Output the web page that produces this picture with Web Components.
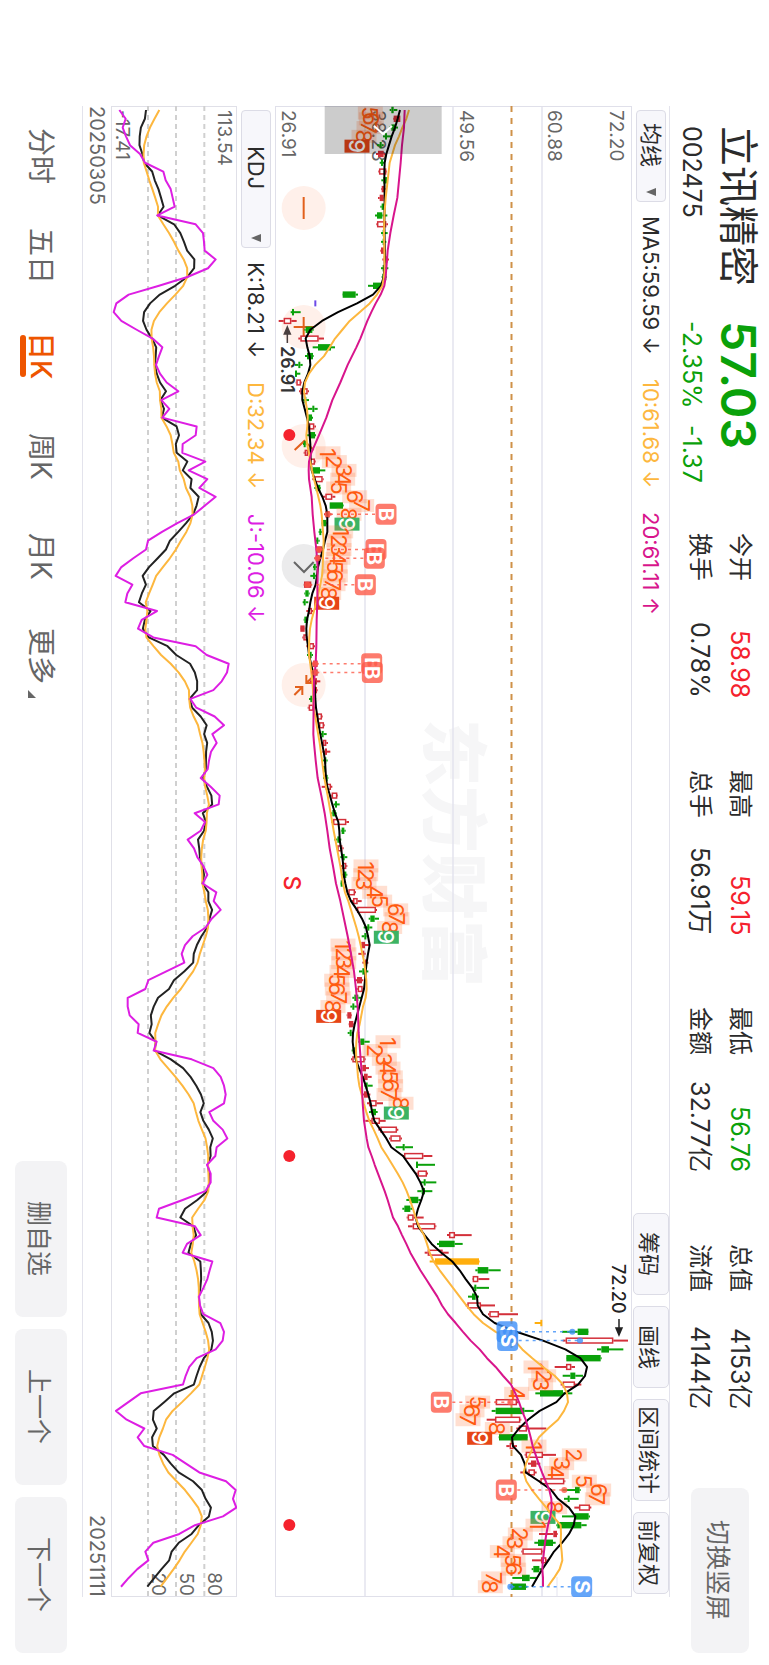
<!DOCTYPE html>
<html lang="zh-CN">
<head>
<meta charset="utf-8">
<meta name="viewport" content="width=device-width, initial-scale=1">
<title>立讯精密 002475 日K</title>
<style>
  html, body { margin: 0; height: 100%; background: #fff; }
  body { font-family: "Inter", "Noto Sans CJK SC", sans-serif; color: #2b2b2b; }
</style>
</head>
<body>
<stock-screen></stock-screen>

<script>
const define = (name, html, setup) => {
  const template = document.createElement('template');
  template.innerHTML = '<style>*{box-sizing:border-box}</style>' + html;
  customElements.define(name, class extends HTMLElement {
    constructor() {
      super();
      this.attachShadow({ mode: 'open' }).append(template.content.cloneNode(true));
    }
    connectedCallback() { if (setup) setup(this, this.shadowRoot); }
  });
};

/* ---------- small parts ---------- */

define('quote-stat', `
<style>
  :host { display: flex; justify-content: space-between; align-items: center; font-size: 24px; line-height: 40px; white-space: nowrap; }
  .value { color: var(--tone, #2b2b2b); font-size: 25px; }
</style>
<span><slot name="label"></slot></span><span class="value"><slot></slot></span>`);

define('soft-button', `
<style>
  :host { display: block; inline-size: 156px; block-size: 52px; }
  button { writing-mode: vertical-rl; text-orientation: sideways; inline-size: 100%; block-size: 100%;
    border: 0; border-radius: 8px; background: #f3f3f5; color: #666; font: inherit; font-size: 25px; padding: 0; text-align: center; }
</style>
<button type="button"><slot></slot></button>`);

define('tool-button', `
<style>
  :host { display: block; block-size: 36px; }
  button { writing-mode: vertical-rl; text-orientation: sideways; block-size: 100%; min-inline-size: 82px; padding: 0; padding-inline: 6px;
    border: 1px solid #dcdce6; border-radius: 5px; background: #f7f7fb; color: #2b2b2b; font: inherit; font-size: 22px; text-align: center; white-space: nowrap; }
</style>
<button type="button"><slot></slot></button>`);

define('indicator-select', `
<style>
  :host { display: block; position: relative; inline-size: var(--w, 92px); block-size: 30px; }
  select { appearance: none; writing-mode: vertical-rl; text-orientation: sideways; inline-size: 100%; block-size: 100%; margin: 0;
    padding: 0; padding-inline-start: var(--pad, 12px); border: 1px solid #dcdce6; border-radius: 4px; background: #f7f7fb;
    color: #2b2b2b; font: inherit; font-size: 22px; line-height: 28px; }
  svg { position: absolute; inset-inline-end: 6px; inset-block-start: 10px; width: 10px; height: 8px; pointer-events: none; }
</style>
<select></select><svg viewBox="0 0 10 8"><path d="M0 4L10 0V8Z" fill="#666"/></svg>`,
(host, root) => {
  const select = root.querySelector('select');
  select.setAttribute('aria-label', host.getAttribute('label'));
  for (const name of host.getAttribute('options').split(',')) select.add(new Option(name));
});

define('period-tab', `
<style>
  :host { display: flex; justify-content: center; }
  button { position: relative; writing-mode: vertical-rl; text-orientation: sideways; border: 0; background: none; padding: 0;
    font: inherit; font-size: 28px; line-height: 42px; color: #666; white-space: nowrap; }
  :host([active]) button { color: #ee5500; font-weight: 500; }
  :host([active]) button::after { content: ""; position: absolute; inset-inline: 3px; inset-block-end: 0; block-size: 6px; border-radius: 3px; background: #ee5500; }
  :host([more]) button::after { content: ""; position: absolute; inset-inline-end: -14px; inset-block-end: 8px; width: 8px; height: 8px;
    background: #666; clip-path: polygon(0 0, 0 100%, 100% 100%); }
</style>
<button type="button"><slot></slot></button>`);

/* ---------- header ---------- */

define('quote-header', `
<style>
  :host { display: flex; align-items: center; block-size: 99px; padding-inline: 126px 12px; }
  .title { display: grid; grid-template-columns: 195px 212px; grid-template-rows: 50px 43px; align-items: center; white-space: nowrap; padding-block-start: 6px; }
  h1 { margin: 0; font-size: 40px; font-weight: 400; line-height: 50px; }
  .price { font-size: 48px; font-weight: 600; line-height: 50px; color: #0aa10a; }
  .code { font-size: 25px; line-height: 36px; }
  .change { display: flex; gap: 16px; font-size: 25px; line-height: 36px; color: #0aa10a; }
  .stats { display: grid; grid-template-columns: repeat(4, 165px); grid-template-rows: 40px 40px; grid-auto-flow: column; column-gap: 72px; }
  .up { --tone: #f5222d; }
  .down { --tone: #0aa10a; }
  soft-button { margin-inline-start: auto; inline-size: 165px; block-size: 58px; }
</style>
<div class="title">
  <h1>立讯精密</h1><span class="price">57.03</span>
  <span class="code">002475</span><span class="change"><span>-2.35%</span><span>-1.37</span></span>
</div>
<div class="stats">
  <quote-stat class="up"><span slot="label">今开</span>58.98</quote-stat>
  <quote-stat><span slot="label">换手</span>0.78%</quote-stat>
  <quote-stat class="up"><span slot="label">最高</span>59.15</quote-stat>
  <quote-stat><span slot="label">总手</span>56.91万</quote-stat>
  <quote-stat class="down"><span slot="label">最低</span>56.76</quote-stat>
  <quote-stat><span slot="label">金额</span>32.77亿</quote-stat>
  <quote-stat><span slot="label">总值</span>4153亿</quote-stat>
  <quote-stat><span slot="label">流值</span>4144亿</quote-stat>
</div>
<soft-button>切换竖屏</soft-button>`);

define('indicator-bar', `
<style>
  :host { display: flex; align-items: center; block-size: 38px; padding-inline-start: 4px; font-size: 22px; white-space: nowrap; }
  :host([compact]) { block-size: 37px; }
  .values { display: flex; gap: 24px; margin-inline-start: 14px; }
  .tools { display: flex; gap: 11px; margin-inline: auto 3px; }
</style>
<slot name="select"></slot>
<div class="values"><slot></slot></div>
<div class="tools"><slot name="tools"></slot></div>`);

/* ---------- charts: drawn in landscape space, turned a quarter to the right ---------- */

const STEP = 8.79, FIRST = 4;          // bar pitch and position of the first bar
const at = i => FIRST + i * STEP;
const unit = n => (n - 16) / 3;        // data is kept in thirds, offset from the axis
const num = n => +n.toFixed(2);

const GREEN = '#0aa10a', RED = '#d3303a';

/* low, body low, body high, high, kind */
const CANDLES = `360,365,372,383g 370,372,392,392R 358,365,378,385g 340,350,352,364g 322,330,336,342g 319,325,342,347R 330,334,340,344g 326,328,350,352r 335,341,352,354g 334,336,346,348R
325,330,342,346R 332,336,344,346g 316,322,338,353g 320,322,350,355r 334,343,345,354g 334,343,345,350g 332,334,346,348R 338,342,354,358R 334,343,345,356g 336,338,350,352g
295,310,334,336g 218,219,258,265g 137,137,137,137p 63,70,73,93g 27,42,65,81r 104,108,128,132g 86,92,147,163r 129,145,184,196g 106,112,130,132g 76,86,92,99g
76,80,82,92g 78,80,94,96r 88,92,114,118r 97,106,110,118g 115,128,134,144g 112,116,127,130g 113,118,134,139r 112,120,136,139g 100,106,108,114g 102,105,115,118r
118,121,136,138r 124,130,151,167g 128,134,159,162r 134,138,152,154g 160,167,188,197r 180,180,220,222g 163,167,180,186R 155,156,170,172g 147,150,155,158g 136,143,146,150g
138,140,157,159R 134,138,150,152R 130,134,138,142g 122,130,136,142g 102,103,125,127R 104,107,117,120g 99,104,108,116g 110,115,127,130r 102,104,114,116g 91,92,105,106R
98,101,112,115r 110,118,133,136r 112,120,126,130g 128,130,144,146R 130,134,144,146R 120,134,142,152R 130,134,142,144R 118,124,128,132g 114,117,132,137r 136,142,157,159r
146,148,163,165r 152,158,162,171g 156,160,170,175r 158,166,172,182R 160,168,170,174g 160,162,166,168g 160,164,174,176g 156,168,184,188r 180,186,203,205r 192,199,202,210g
184,188,198,201g 185,190,230,238r 214,216,224,228g 194,203,210,215g 200,203,218,222r 212,222,225,233g 214,217,230,233r 216,220,230,233g 213,216,219,221g 232,236,256,259r
246,250,264,276r 258,262,319,322r 297,302,315,328g 282,295,299,308g 276,284,290,298g 272,275,286,300R 266,280,284,288R 278,286,292,296R 268,278,286,296g 255,262,277,281R
260,264,279,284r 248,254,266,274g 242,248,254,262g 231,233,245,247R 237,238,251,253R 234,240,246,252g 266,272,284,300g 246,249,258,260g 244,248,285,288r 274,278,289,298R
276,283,294,306R 284,290,294,309g 280,283,297,302R 292,298,321,340r 298,306,319,324g 287,305,331,348r 326,332,382,386r 358,362,393,397r 378,400,405,430g 398,403,461,488r
440,441,445,496g 440,444,472,475r 453,464,468,500g 443,456,466,488g 410,420,446,453g 398,404,422,429g 411,414,432,462r 415,429,497,500r 532,538,556,606r 502,508,555,579g
465,474,519,537r 480,496,628,630o 617,624,656,693g 608,609,626,659r 611,616,620,658g 595,607,618,628g 588,593,634,676r 655,659,688,745r 795,815,818,818o 877,924,956,957g
879,888,1031,1075r 982,995,1018,1061g 889,890,993,996g 855,889,905,916r 879,902,917,940g 873,879,916,935r 797,811,880,908g 675,678,742,745r 666,678,764,792g 651,676,752,755r
740,747,772,830r 687,688,774,775g 710,720,732,742r 765,768,820,859r 775,784,800,812R 752,776,796,801r 808,812,884,887r 878,916,930,933g 883,896,900,927g 914,928,961,965r
877,915,957,961g 860,863,935,951g 808,851,862,864R 794,805,850,858g 755,758,818,821r 787,814,830,836r 786,791,809,816g 728,757,780,803g 720,724,769,773g`.split(/\s+/);

/* moving averages: index:value */
const MA5 = '0:391 1:384 2:376 3:366 4:358 5:350 6:345 7:344 10:345 13:344 17:346 19:342 20:334 21:310 22:262 23:205 24:157 25:122 26:108 27:113 28:120 29:122 30:115 31:104 32:98 33:98 34:105 35:112 36:118 37:120 38:122 40:123 41:126 42:135 43:145 44:158 45:168 46:173 48:173 49:166 50:160 51:152 52:145 53:142 54:138 55:128 56:122 57:118 58:112 59:110 60:111 61:115 62:118 63:124 64:130 65:134 66:136 67:137 68:139 69:143 70:147 71:152 72:157 73:162 74:166 76:169 77:173 78:181 79:188 80:196 81:206 82:209 83:210 84:214 85:218 86:221 87:222 88:227 89:233 90:244 91:262 92:277 93:289 94:295 95:300 96:295 97:291 98:288 99:286 100:283 101:276 102:269 103:262 104:255 105:250 106:249 107:252 108:258 109:268 110:279 111:288 112:296 113:303 114:307 115:314 116:332 117:350 118:365 119:400 120:419 121:438 122:452 123:463 124:455 125:445 126:438 127:445 128:465 129:486 130:515 131:548 132:570 133:588 134:608 135:622 136:624 137:640 138:675 139:740 140:820 141:887 142:932 143:952 144:946 145:925 146:885 147:860 148:810 149:775 150:748 151:727 152:730 153:754 154:765 155:768 156:808 157:845 158:865 159:898 160:917 161:912 162:898 163:877 164:853 165:836 166:818 167:802 168:787';
const MA10 = '0:418 1:410 2:398 3:388 4:376 5:368 6:360 8:354 10:348 12:344 14:343 16:344 18:345 19:343 20:338 21:322 22:300 23:270 24:240 25:218 26:196 27:180 28:163 29:137 30:118 31:106 32:103 33:107 34:112 35:114 36:113 37:110 38:112 39:118 40:122 41:127 42:133 43:140 44:146 45:152 46:156 47:158 48:160 49:162 50:161 51:160 52:159 53:157 54:152 55:146 56:140 57:133 58:126 59:121 60:119 61:118 62:118 63:122 64:125 65:128 66:130 67:131 68:132 69:137 70:141 72:150 74:157 76:164 78:174 80:183 82:192 84:202 86:212 88:220 89:226 90:236 91:244 92:252 93:260 94:267 95:273 96:278 97:284 98:287 99:290 100:291 101:288 102:280 103:275 104:270 105:263 106:260 107:259 108:260 109:263 110:265 111:269 112:276 113:282 114:290 115:299 116:312 117:324 118:335 119:352 120:368 121:384 122:399 123:411 124:421 125:430 126:438 127:448 128:463 129:472 130:480 131:492 132:510 133:530 134:550 135:570 136:590 137:612 138:640 139:678 140:735 141:758 142:788 143:820 144:855 145:880 146:892 147:895 148:883 149:865 150:835 151:808 152:792 153:780 154:769 155:762 156:770 157:787 158:808 159:830 160:850 161:873 162:874 163:873 164:876 165:878 166:870 167:853 168:834';
const MA20 = '0:405 2:403 4:397 6:393 8:388 10:383 12:372 14:362 16:354 18:350 19:348 20:344 21:333 22:318 23:305 24:293 26:272 27:260 29:234 31:212 33:188 35:170 37:148 39:125 40:118 41:117 42:118 43:122 44:126 46:129 48:134 50:140 52:144 56:143 58:141 61:140 63:138 65:133 67:132 71:131 72:133 74:138 76:144 78:155 80:165 82:173 84:180 86:190 88:199 90:212 92:223 94:234 96:244 98:253 100:259 102:264 105:267 107:271 109:275 113:279 115:283 117:291 118:296 119:306 120:315 121:325 122:335 123:345 124:354 125:362 126:370 127:385 128:397 129:410 130:422 131:437 132:452 133:469 134:486 135:503 136:517 137:535 138:558 139:580 140:603 141:630 142:652 143:678 144:700 145:724 146:737 147:748 148:757 149:768 150:776 151:783 152:789 153:798 154:807 155:817 156:828 157:839 158:845 159:846 160:842 161:835 162:830 163:826 164:823 165:820 166:818 167:820 168:820';

/* sequential count marks: first bar, first number, centre of each mark, colour of the ninth */
const COUNTS = [
  [0, 5, [302, 305, 298, 283, 262], 'r'],
  [39, 1, [175, 194, 223, 219, 207, 255, 276, 238, 232], 'g'],
  [48, 1, [213, 208, 208, 205, 196, 197, 190, 177, 171], 'r'],
  [86, 1, [289, 288, 283, 315, 330, 378, 382, 360, 350], 'g'],
  [95, 1, [220, 223, 222, 217, 201, 203, 207, 190, 177], 'r'],
  [106, 1, [355, 316, 344, 355, 362, 363, 358, 394, 380], 'g'],
  [143, 1, [799, 822, 813, 741, 624, 607, 595, 683, 630], 'r'],
  [152, 1, [793, 914, 876, 860, 944, 987, 983, 855, 820], 'g'],
  [161, 1, [805, 752, 736, 698, 730, 732, 672, 662], 'r'],
];

/* trades: bar, badge centre, letter, price point */
const TRADES = [
  [46, 349, 'B', 174], [50, 319, 'B', 148], [51, 314, 'B', 144], [54, 287, 'B', 113],
  [63, 306, 'B', 136], [64, 308, 'B', 134], [147, 515, 'B', 722], [157, 710, 'B', 884],
  [139, 712, 'S', 908], [140, 714, 'S', 931], [168, 936, 'S', 722],
];

define('price-chart', `
<style>
  :host { display: block; }
  svg { display: block; writing-mode: horizontal-tb; height: 100%; width: auto; font-family: "Inter", "Noto Sans CJK SC", sans-serif; }
</style>
<svg viewBox="0 0 357 1491" role="img" aria-label="日K线图"><g transform="translate(357 0) rotate(90)"></g></svg>`,
(host, root) => {
  const H = 357, L = 1491;
  const y = n => num(H - unit(n));
  const out = [];
  const line = (x1, y1, x2, y2, extra) => out.push(`<path d="M${num(x1)} ${num(y1)}L${num(x2)} ${num(y2)}" fill="none" ${extra}/>`);
  const text = (x, base, size, fill, str, extra = '') => out.push(`<text x="${num(x)}" y="${num(base)}" font-size="${size}" fill="${fill}" ${extra}>${str}</text>`);

  text(747, 203, 67, '#f6f6f7', '东方财富', 'font-weight="900" text-anchor="middle"');
  for (const v of [90, 178, 267]) line(0, H - v, L, H - v, 'stroke="#e3e3ee" stroke-width="1.5"');
  line(L - 20, H - 282, L, H - 282, 'stroke="#e3e3ee"');
  out.push(`<path d="M.5 0V${H}M${L - .5} 0V${H}M0 .5H${L}M0 ${H - .5}H${L}" fill="none" stroke="#e0e0ea"/>`);
  line(0, H - 236.5, L, H - 236.5, 'stroke="#cf9148" stroke-width="2" stroke-dasharray="6 6"');

  [['26.91', 7], ['38.23', 97], ['49.56', 185], ['60.88', 273], ['72.20', 335]].forEach(([s, v]) => text(4, H - v, 19, '#666', s));

  /* event icons */
  const disc = (cx, c, fill) => out.push(`<circle cx="${cx}" cy="${y(c)}" r="22" fill="${fill}"/>`);
  const rose = '#fff0ea', ink = 'stroke="#e2601c" stroke-width="2"';
  disc(102, 102, rose); line(91, y(102), 113, y(102), ink);
  disc(221, 102, rose); line(211, y(102), 232, y(102), ink); line(221, y(72), 221, y(133), ink);
  disc(340, 102, rose); out.push(`<path d="M344 ${y(75)}L335 ${y(104)}L344 ${y(132)}" fill="none" ${ink}/>`);
  disc(460, 102, '#ebebec'); out.push(`<path d="M456 ${y(73)}L466 ${y(103)}L456 ${y(132)}" fill="none" stroke="#666" stroke-width="2"/>`);
  disc(579, 102, rose);
  out.push(`<path d="M569 ${y(135)}L577 ${y(110)}M569 ${y(110)}H577V${y(132)}M589 ${y(74)}L581 ${y(98)}M589 ${y(98)}H581V${y(76)}" fill="none" ${ink}/>`);
  for (const x of [329, 1050, 1419]) out.push(`<circle cx="${x}" cy="${y(59)}" r="6" fill="#f5222d"/>`);
  text(777, y(42), 23, '#f5222d', 'S', 'text-anchor="middle" font-weight="500"');

  /* candles */
  CANDLES.forEach((row, i) => {
    const kind = row.slice(-1), [lo, b0, b1, hi] = row.slice(0, -1).split(',').map(Number);
    const x = at(i), color = { g: GREEN, r: RED, R: RED, o: '#ffae0d', p: '#6d4ae8' }[kind];
    if (kind === 'p') return line(x - 3, y(lo), x + 3, y(lo), `stroke="${color}" stroke-width="2"`);
    line(x, y(lo), x, y(b0), `stroke="${color}" stroke-width="2"`);
    line(x, y(b1), x, y(hi), `stroke="${color}" stroke-width="2"`);
    const h = Math.max((b1 - b0) / 3, 2);
    out.push(kind === 'r'
      ? `<rect x="${num(x - 2.4)}" y="${num(y(b1) + .7)}" width="4.8" height="${num(Math.max(h - 1.4, 1))}" fill="#fff" stroke="${color}" stroke-width="1.5"/>`
      : `<rect x="${num(x - 3.2)}" y="${y(b1)}" width="6.4" height="${num(h)}" fill="${color}"/>`);
  });

  /* count marks */
  for (const [start, from, marks, last] of COUNTS) marks.forEach((c, k) => {
    const n = from + k, x = Math.max(at(start + k) + (n === 9 ? 1 : 0), 7);
    const nine = n === 9;
    out.push(`<rect x="${num(x - 6.5)}" y="${num(y(c) - 12.5)}" width="13" height="25" fill="${nine ? (last === 'g' ? '#3cb364' : '#e64517') : '#ff7a3d'}" ${nine ? '' : 'fill-opacity=".24"'}/>`);
    text(x, y(c) + 8, 22, nine ? '#fff' : '#ff5a0f', n, `text-anchor="middle"${nine ? ' font-weight="500"' : ''}`);
  });

  /* averages */
  const poly = (src, color, w) => out.push(`<polyline points="${src.split(' ').map(p => { const [i, v] = p.split(':'); return num(at(+i)) + ',' + y(+v); }).join(' ')}" fill="none" stroke="${color}" stroke-width="${w}" stroke-linejoin="round"/>`);
  poly(MA5, '#000', 2);
  poly(MA10, '#fdb73e', 2);
  poly(MA20, '#d8158c', 2);

  /* trades */
  for (const [i, c, letter, p] of TRADES) {
    const x = at(i), color = letter === 'B' ? '#fd5a48' : '#3d8ef7';
    line(x, y(c) + (p > c ? -11 : 11), x, y(p), `stroke="${color}" stroke-width="1.5" stroke-dasharray="3 4" opacity=".8"`);
    out.push(`<circle cx="${num(x)}" cy="${y(p)}" r="3" fill="${color}" opacity=".8"/>
      <rect x="${num(x - 10.5)}" y="${num(y(c) - 10.5)}" width="21" height="21" rx="4" fill="${color}" fill-opacity=".8"/>`);
    text(x, y(c) + 7, 20, '#fff', letter, 'text-anchor="middle" font-weight="700"');
  }

  /* extremes */
  text(240, y(34), 18, '#333', '26.91', 'font-weight="600"');
  out.push(`<path d="M237 ${y(53)}H224M221 ${y(53)}l7 -3v6z" fill="#4a3f3f" stroke="#4a3f3f" stroke-width="1.5"/>`);
  text(1158, y(1028), 18, '#222', '72.20', 'font-weight="500"');
  out.push(`<path d="M1213 ${y(1048)}H1226M1229 ${y(1048)}l-7 -3v6z" fill="#222" stroke="#222" stroke-width="1.5"/>`);

  /* range handle */
  out.push(`<rect x="0" y="${y(516)}" width="48" height="117" fill="#000" fill-opacity=".2"/>
    <path d="M20 ${y(367)}L28 ${y(340)}L20 ${y(313)}" fill="none" stroke="#fff" stroke-width="2"/>`);
  root.querySelector('g').innerHTML = out.join('');
});

/* J values; D and K follow from them: D = (6·D' + J) / 7, K = (J + 2·D) / 3 */
const J = [118,137,128,138,150,180,195,250,257,272,278,284,232,347,369,372,374,407,384,322,
  237,146,109,101,124,170,218,247,237,228,240,260,295,244,268,247,350,347,308,307,
  376,326,382,358,407,375,343,292,246,204,198,160,124,107,157,142,136,231,185,174,
  220,347,380,446,441,425,400,331,349,404,432,397,410,393,387,383,362,392,419,416,
  344,375,362,323,342,352,370,382,368,409,401,422,395,377,338,315,305,313,259,205,
  196,143,143,149,176,173,230,221,335,400,422,432,437,432,388,400,428,442,410,406,
  381,392,392,376,308,237,230,345,362,321,308,397,389,382,370,357,360,370,421,432,
  428,407,350,328,317,309,182,145,108,140,193,173,193,278,318,358,438,467,459,469,
  429,345,298,220,196,205,172,146,123];

define('kdj-chart', `
<style>
  :host { display: block; }
  svg { display: block; writing-mode: horizontal-tb; height: 100%; width: auto; font-family: "Inter", "Noto Sans CJK SC", sans-serif; }
</style>
<svg viewBox="0 0 126 1491" role="img" aria-label="KDJ指标"><g transform="translate(126 0) rotate(90)"></g></svg>`,
(host, root) => {
  const H = 126, L = 1491, y = n => num(H - (n - 93) / 3), out = [];
  out.push(`<path d="M.5 0V${H}M${L - .5} 0V${H}M0 .5H${L}M0 ${H - .5}H${L}" fill="none" stroke="#e0e0e8"/>`);
  for (const v of [204, 288, 373]) out.push(`<path d="M0 ${y(v)}H${L}" stroke="#d0d0d0" stroke-width="2" stroke-dasharray="5 4"/>`);
  const text = (x, base, s, extra = '') => out.push(`<text x="${x}" y="${base}" font-size="19" fill="#666" ${extra}>${s}</text>`);
  text(4, y(415), '113.54'); text(4, y(108), '-17.41');
  text(1490, y(385), '80', 'text-anchor="end"'); text(1490, y(301), '50', 'text-anchor="end"'); text(1490, y(216), '20', 'text-anchor="end"');
  let d = 258;
  const D = J.map(j => d = (6 * d + j) / 7), K = J.map((j, i) => (j + 2 * D[i]) / 3);
  for (const [set, color] of [[K, '#222'], [D, '#fdb73e'], [J, '#dd1ee3']])
    out.push(`<polyline points="${set.map((v, i) => num(at(i)) + ',' + y(v)).join(' ')}" fill="none" stroke="${color}" stroke-width="2" stroke-linejoin="round"/>`);
  root.querySelector('g').innerHTML = out.join('');
});

/* ---------- footer ---------- */

define('period-footer', `
<style>
  :host { display: flex; align-items: center; flex: 1; padding-inline: 106px 12px; }
  nav { display: grid; grid-template-columns: repeat(6, 100px); }
  .actions { display: flex; gap: 12px; margin-inline-start: auto; }
</style>
<nav aria-label="周期">
  <period-tab>分时</period-tab><period-tab>五日</period-tab><period-tab active>日K</period-tab>
  <period-tab>周K</period-tab><period-tab>月K</period-tab><period-tab more>更多</period-tab>
</nav>
<div class="actions"><soft-button>删自选</soft-button><soft-button>上一个</soft-button><soft-button>下一个</soft-button></div>`);

define('stock-screen', `
<style>
  :host { display: flex; flex-direction: column; writing-mode: vertical-rl; text-orientation: sideways; width: 100%; height: 100vh; min-height: 1400px; background: #fff; }
  main { margin-inline: 106px 68px; border-block: 1px solid #e3e3ec; }
  .k { color: #2b2b2b; } .y { color: #fdb73e; } .m { color: #d8158c; } .j { color: #dd1ee3; }
  .kdj { --w: 138px; --pad: 35px; }
  .dates { display: flex; justify-content: space-between; block-size: 28px; line-height: 28px; font-size: 20px; color: #666; }
</style>
<quote-header></quote-header>
<main>
  <indicator-bar compact>
    <indicator-select slot="select" label="主图指标" options="均线,BOLL"></indicator-select>
    <span class="k">MA5:59.59 ↓</span><span class="y">10:61.68 ↓</span><span class="m">20:61.11 ↑</span>
    <tool-button slot="tools">筹码</tool-button><tool-button slot="tools">画线</tool-button>
    <tool-button slot="tools">区间统计</tool-button><tool-button slot="tools">前复权</tool-button>
  </indicator-bar>
  <price-chart></price-chart>
  <indicator-bar>
    <indicator-select class="kdj" slot="select" label="副图指标" options="KDJ,MACD"></indicator-select>
    <span class="k">K:18.21 ↓</span><span class="y">D:32.34 ↓</span><span class="j">J:-10.06 ↓</span>
  </indicator-bar>
  <kdj-chart></kdj-chart>
  <div class="dates"><span>20250305</span><span>20251111</span></div>
</main>
<period-footer></period-footer>`);
</script>
</body>
</html>
